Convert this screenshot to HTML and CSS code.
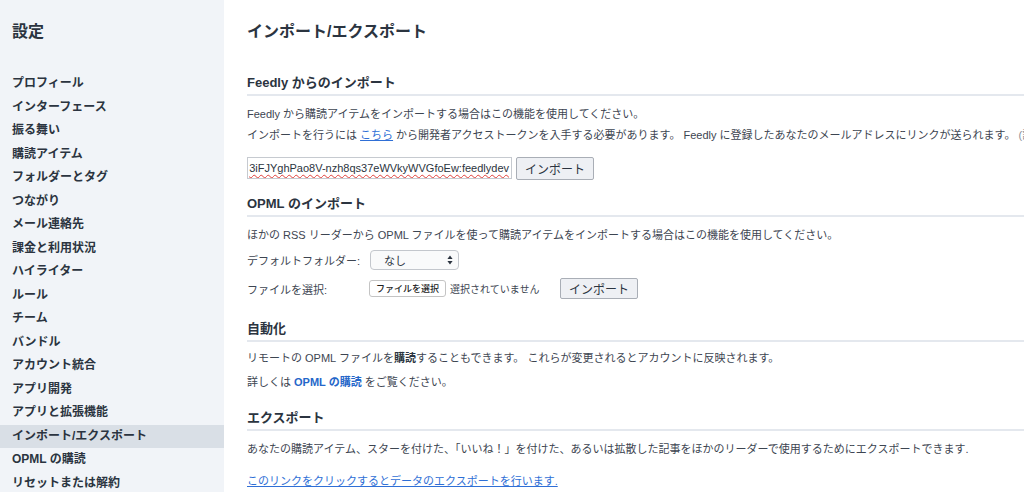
FILE: index.html
```html
<!DOCTYPE html>
<html lang="ja">
<head>
<meta charset="utf-8">
<title>設定 - インポート/エクスポート</title>
<link rel="stylesheet" href="styles.css">
</head>
<body>
<aside class="sidebar">
  <div class="side-title">設定</div>
  <nav class="nav">
    <a class="nav-item">プロフィール</a>
    <a class="nav-item">インターフェース</a>
    <a class="nav-item">振る舞い</a>
    <a class="nav-item">購読アイテム</a>
    <a class="nav-item">フォルダーとタグ</a>
    <a class="nav-item">つながり</a>
    <a class="nav-item">メール連絡先</a>
    <a class="nav-item">課金と利用状況</a>
    <a class="nav-item">ハイライター</a>
    <a class="nav-item">ルール</a>
    <a class="nav-item">チーム</a>
    <a class="nav-item">バンドル</a>
    <a class="nav-item">アカウント統合</a>
    <a class="nav-item">アプリ開発</a>
    <a class="nav-item">アプリと拡張機能</a>
    <a class="nav-item active">インポート/エクスポート</a>
    <a class="nav-item">OPML の購読</a>
    <a class="nav-item">リセットまたは解約</a>
  </nav>
</aside>
<main class="main">
  <h1 class="page-title">インポート/エクスポート</h1>

  <section class="section sec-feedly">
    <h2 class="sec-title">Feedly からのインポート</h2>
    <p class="text first">Feedly から購読アイテムをインポートする場合はこの機能を使用してください。</p>
    <p class="text second">インポートを行うには <a class="link">こちら</a> から開発者アクセストークンを入手する必要があります。 Feedly に登録したあなたのメールアドレスにリンクが送られます。 <span class="muted">(詳細</span></p>
    <div class="token-row">
      <div class="token-input"><span class="token-text">3iFJYghPao8V-nzh8qs37eWVkyWVGfoEw:feedlydev</span></div>
      <button class="btn">インポート</button>
    </div>
  </section>

  <section class="section sec-opml">
    <h2 class="sec-title">OPML のインポート</h2>
    <p class="text first">ほかの RSS リーダーから OPML ファイルを使って購読アイテムをインポートする場合はこの機能を使用してください。</p>
    <div class="form-row row-folder">
      <span class="label">デフォルトフォルダー:</span>
      <div class="select">
        <span>なし</span>
        <svg class="select-arrows" width="6" height="10" viewBox="0 0 6 10"><path d="M3 0.5 L5.6 4 L0.4 4 Z M3 9.5 L5.6 6 L0.4 6 Z" fill="#2b3440"/></svg>
      </div>
    </div>
    <div class="form-row row-file">
      <span class="label">ファイルを選択:</span>
      <span class="file-btn">ファイルを選択</span>
      <span class="file-none">選択されていません</span>
      <button class="btn btn-opml">インポート</button>
    </div>
  </section>

  <section class="section sec-auto">
    <h2 class="sec-title">自動化</h2>
    <p class="text first tall">リモートの OPML ファイルを<strong class="strong">購読</strong>することもできます。 これらが変更されるとアカウントに反映されます。</p>
    <p class="text tall">詳しくは <a class="link-bold">OPML の購読</a> をご覧ください。</p>
  </section>

  <section class="section sec-export">
    <h2 class="sec-title">エクスポート</h2>
    <p class="text first">あなたの購読アイテム、スターを付けた、「いいね！」を付けた、あるいは拡散した記事をほかのリーダーで使用するためにエクスポートできます.</p>
    <p class="text export-link"><a class="link">このリンクをクリックするとデータのエクスポートを行います.</a></p>
  </section>
</main>
</body>
</html>
```

FILE: styles.css
```css
* { box-sizing: border-box; }

html, body {
  margin: 0;
  height: 492px;
  overflow: hidden;
}

body {
  display: flex;
  font-family: "Liberation Sans", "Noto Sans CJK JP", sans-serif;
  color: #3d4551;
  background: #ffffff;
}

/* Sidebar */
.sidebar {
  width: 224px;
  flex: 0 0 224px;
  background: #f1f4f8;
  padding-top: 22px;
}

.side-title {
  font-size: 16px;
  font-weight: bold;
  line-height: 20px;
  color: #2b3440;
  padding-left: 12px;
}

.nav {
  display: flex;
  flex-direction: column;
  margin-top: 30px;
}

.nav-item {
  display: block;
  height: 23.5px;
  line-height: 23.5px;
  padding-left: 12px;
  font-size: 12px;
  font-weight: bold;
  color: #2b3440;
  white-space: nowrap;
}

.nav-item.active {
  background: #d9dfe6;
}

/* Main */
.main {
  flex: 1;
  min-width: 0;
  padding-left: 23px;
  white-space: nowrap;
}

.page-title {
  margin: 22px 0 0;
  font-size: 16px;
  line-height: 20px;
  font-weight: bold;
  color: #2b3440;
}

.section { margin-right: -40px; }

.sec-feedly { margin-top: 32px; }
.sec-opml { margin-top: 15px; }
.sec-auto { margin-top: 21px; }
.sec-export { margin-top: 17px; }

.sec-title {
  margin: 0;
  font-size: 13px;
  line-height: 18px;
  font-weight: bold;
  color: #2b3440;
  padding-bottom: 2px;
  border-bottom: 2px solid #e4e8ee;
}

.text {
  margin: 0;
  font-size: 11px;
  line-height: 20px;
}

.text.first { margin-top: 8px; }
.text.second { margin-top: 1px; }
.sec-auto .text.first { margin-top: 6px; }
.text.tall + .text.tall { margin-top: 4px; }
.export-link { margin-top: 12px; }

.muted { color: #8a9099; }

.link {
  color: #2f6fd6;
  text-decoration: underline;
}

.link-bold {
  color: #2466c9;
  font-weight: bold;
}

.strong {
  font-weight: bold;
  color: #2b3440;
}

/* Feedly token row */
.token-row {
  display: flex;
  align-items: flex-start;
  gap: 4px;
  margin-top: 12px;
}

.token-input {
  width: 265px;
  height: 22px;
  border: 1px solid #c6cad0;
  background: #fff;
  display: flex;
  justify-content: flex-end;
  align-items: center;
  overflow: hidden;
  padding-right: 2px;
}

.token-text {
  font-size: 11px;
  color: #2b3440;
  text-decoration: underline wavy #e0403a;
  text-decoration-thickness: 1px;
  text-underline-offset: 2px;
}

.btn {
  width: 78px;
  height: 23px;
  font-family: inherit;
  font-size: 12px;
  color: #2b3440;
  background: #eef0f4;
  border: 1px solid #a9aeb6;
  border-radius: 2px;
  padding: 0;
}

/* OPML form */
.form-row {
  display: flex;
  align-items: center;
  font-size: 11px;
}

.row-folder {
  margin-top: 5px;
  height: 20px;
}

.row-file {
  margin-top: 8px;
  height: 21px;
}

.label {
  width: 123px;
  flex: 0 0 123px;
}

.select {
  width: 89px;
  height: 20px;
  border: 1px solid #c3c7cd;
  border-radius: 4px;
  background: #f9fafb;
  display: flex;
  align-items: center;
  justify-content: space-between;
  padding: 0 5px 0 13px;
  color: #2b3440;
}

.select-arrows { display: block; }

.file-btn {
  width: 77px;
  height: 17px;
  margin-left: -1px;
  border: 1px solid #c4c4c4;
  border-radius: 3px;
  background: #fff;
  font-size: 9px;
  font-weight: 500;
  color: #222;
  display: flex;
  align-items: center;
  justify-content: center;
}

.file-none {
  margin-left: 4px;
  width: 110px;
  font-size: 10px;
  color: #3d4551;
}

.btn-opml {
  height: 21px;
}
```
